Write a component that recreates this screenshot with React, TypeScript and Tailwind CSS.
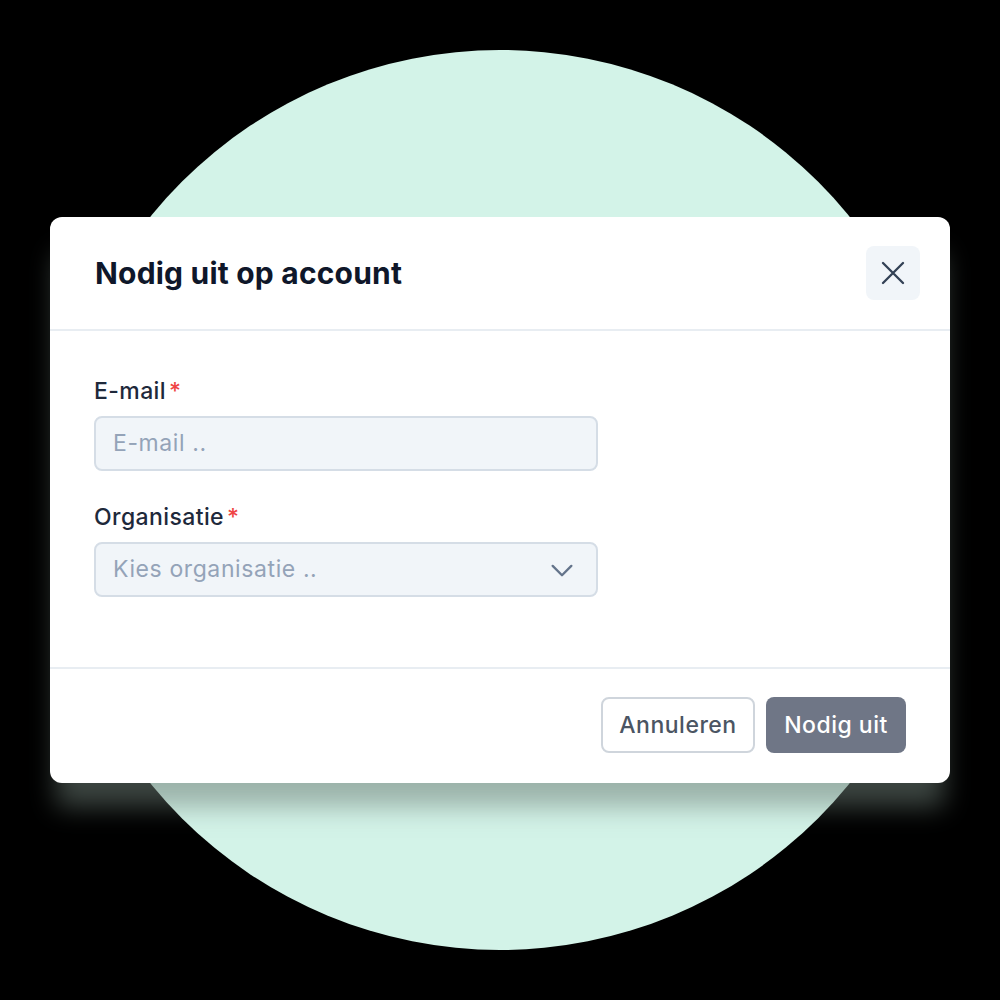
import React from "react";

export default function App() {
  return (
    <div className="relative w-[1000px] h-[1000px] bg-black overflow-hidden" style={{ fontFamily: "Inter, 'Noto Sans', sans-serif" }}>
      <div className="absolute left-[50px] top-[50px] w-[900px] h-[900px] rounded-full bg-[#d3f3e8]" />
      <div className="absolute left-[50px] top-[217px] w-[900px] bg-white rounded-[12px] shadow-[0_30px_26px_-6px_rgba(110,125,118,0.55)] flex flex-col">
        <div className="h-[114px] flex items-center justify-between pl-[45px] pr-[30px] border-b-2 border-[#e8edf2]">
          <h1 className="text-[30px] font-bold text-[#0f172a] tracking-[0.2px]">Nodig uit op account</h1>
          <button className="w-[54px] h-[54px] rounded-[8px] bg-[#f1f5f9] flex items-center justify-center">
            <svg width="30" height="30" viewBox="0 0 24 24" fill="none" stroke="#334155" strokeWidth="1.9" strokeLinecap="round">
              <path d="M4 4l16 16M20 4L4 20" />
            </svg>
          </button>
        </div>
        <div className="pt-[46px] pb-[70px] px-[44px] flex flex-col">
          <label className="text-[23px] font-medium text-[#1e293b] leading-[28px] tracking-[0.4px]">
            E-mail<span className="text-[#ef4444] ml-[3px]">*</span>
          </label>
          <div className="mt-[11px] w-[504px] h-[55px] rounded-[8px] bg-[#f1f5f9] border-2 border-[#d5dde6] flex items-center pl-[17px] text-[23px] tracking-[0.6px] text-[#94a3b8]">
            E-mail ..
          </div>
          <label className="mt-[32px] text-[23px] font-medium text-[#1e293b] leading-[28px] tracking-[0.4px]">
            Organisatie<span className="text-[#ef4444] ml-[3px]">*</span>
          </label>
          <div className="mt-[11px] w-[504px] h-[55px] rounded-[8px] bg-[#f1f5f9] border-2 border-[#d5dde6] flex items-center justify-between pl-[17px] pr-[20px] text-[23px] tracking-[0.6px] text-[#94a3b8]">
            <span>Kies organisatie ..</span>
            <svg width="28" height="28" viewBox="0 0 24 24" fill="none" stroke="#64748b" strokeWidth="2" strokeLinecap="round" strokeLinejoin="round">
              <path d="M4 8.5l8 8 8-8" />
            </svg>
          </div>
        </div>
        <div className="border-t-2 border-[#e8edf2] pt-[28px] pb-[30px] pr-[44px] flex justify-end gap-[11px]">
          <button className="w-[154px] h-[56px] rounded-[8px] border-2 border-[#cfd5dc] bg-white text-[23px] tracking-[0.5px] font-medium text-[#4b5563]">
            Annuleren
          </button>
          <button className="w-[140px] h-[56px] rounded-[8px] bg-[#6f7686] text-[23px] tracking-[0.5px] font-medium text-white">
            Nodig uit
          </button>
        </div>
      </div>
    </div>
  );
}
